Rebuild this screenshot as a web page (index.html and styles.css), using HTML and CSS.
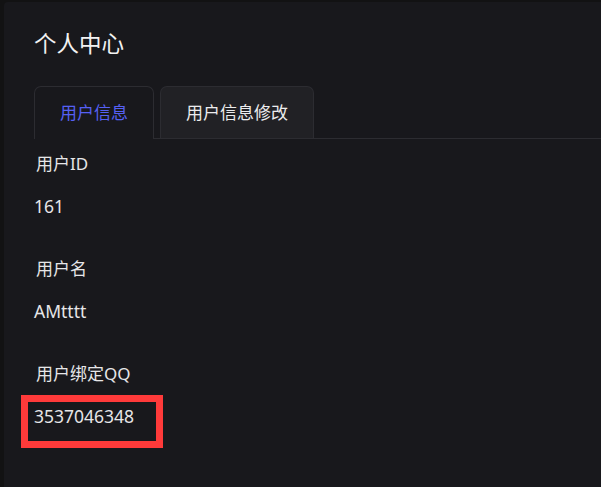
FILE: index.html
```html
<!DOCTYPE html>
<html lang="zh-CN">
<head>
<meta charset="utf-8">
<title>个人中心</title>
<link rel="stylesheet" href="styles.css">
</head>
<body>
<div class="card">
  <h1 class="title">个人中心</h1>
  <div class="tabs">
    <div class="tab active">用户信息</div>
    <div class="tab">用户信息修改</div>
  </div>
  <div class="info">
    <div class="label">用户ID</div>
    <div class="value">161</div>
    <div class="label">用户名</div>
    <div class="value">AMtttt</div>
    <div class="label">用户绑定QQ</div>
    <div class="value boxed">3537046348</div>
  </div>
</div>
</body>
</html>
```
FILE: styles.css
```css
html, body {
  margin: 0;
  padding: 0;
  height: 100%;
  background: #121213;
  overflow: hidden;
}
body {
  font-family: "Noto Sans", "Noto Sans CJK SC", sans-serif;
  color: #e6e6e8;
}
.card {
  margin: 2px 0 0 4px;
  height: calc(100% - 2px);
  background: #18181c;
  border-radius: 4px 0 0 0;
  padding: 0 0 0 30px;
  box-sizing: border-box;
}
.title {
  margin: 0;
  padding-top: 27px;
  font-size: 22.5px;
  line-height: 30px;
  font-weight: 400;
  color: #f2f2f2;
}
.tabs {
  display: flex;
  gap: 6px;
  margin-top: 27px;
  border-bottom: 1px solid #2c2c31;
}
.tab {
  height: 51px;
  padding: 0 25px;
  border: 1px solid #2c2c31;
  border-bottom: none;
  border-radius: 7px 7px 0 0;
  background: #212125;
  font-size: 17px;
  line-height: 51px;
  color: #ececee;
  margin-bottom: -1px;
}
.tab.active {
  background: #18181c;
  color: #5660f4;
  height: 52px;
}
.info {
  padding-top: 13px;
}
.label {
  padding-left: 2px;
  font-size: 17px;
  line-height: 24px;
  color: #e6e6e8;
}
.value {
  margin-top: 18px;
  margin-bottom: 39px;
  font-size: 17.5px;
  line-height: 24px;
  color: #e6e6e8;
}
.value.boxed {
  width: fit-content;
  margin-top: 9px;
  margin-left: -13px;
  padding: 2px 22px 13px 6px;
  border: 7px solid #ff3a3a;
}
```
